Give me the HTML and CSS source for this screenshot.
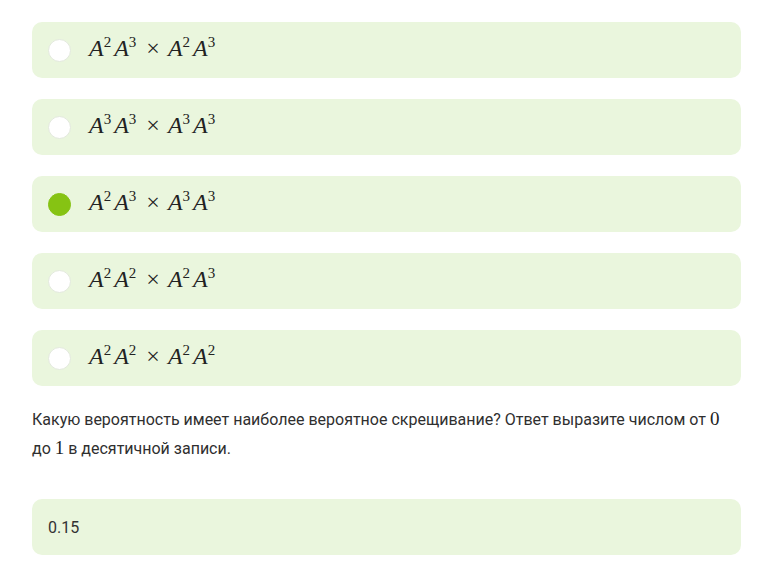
FILE: index.html
```html
<!DOCTYPE html>
<html lang="ru">
<head>
<meta charset="utf-8">
<link rel="stylesheet" href="styles.css">
</head>
<body>
<div class="page">
  <div class="options">
    <div class="option"><span class="radio"></span><span class="math"><i>A</i><sup>2</sup><i>A</i><sup>3</sup><span class="times">×</span><i>A</i><sup>2</sup><i>A</i><sup>3</sup></span></div>
    <div class="option"><span class="radio"></span><span class="math"><i>A</i><sup>3</sup><i>A</i><sup>3</sup><span class="times">×</span><i>A</i><sup>3</sup><i>A</i><sup>3</sup></span></div>
    <div class="option"><span class="radio checked"></span><span class="math"><i>A</i><sup>2</sup><i>A</i><sup>3</sup><span class="times">×</span><i>A</i><sup>3</sup><i>A</i><sup>3</sup></span></div>
    <div class="option"><span class="radio"></span><span class="math"><i>A</i><sup>2</sup><i>A</i><sup>2</sup><span class="times">×</span><i>A</i><sup>2</sup><i>A</i><sup>3</sup></span></div>
    <div class="option"><span class="radio"></span><span class="math"><i>A</i><sup>2</sup><i>A</i><sup>2</sup><span class="times">×</span><i>A</i><sup>2</sup><i>A</i><sup>2</sup></span></div>
  </div>
  <p class="question">Какую вероятность имеет наиболее вероятное скрещивание? Ответ выразите числом от <span class="num">0</span> до <span class="num">1</span> в десятичной записи.</p>
  <div class="answer">0.15</div>
</div>
</body>
</html>
```
FILE: styles.css
```css
html, body {
  margin: 0;
  padding: 0;
  background: #ffffff;
}
.page {
  padding: 22px 26px 0 32px;
  font-family: Roboto, "Liberation Sans", sans-serif;
  color: #2f2f2f;
}
.options {
  display: flex;
  flex-direction: column;
  gap: 21px;
}
.option {
  height: 56px;
  background: #eaf6dd;
  border-radius: 10px;
  display: flex;
  align-items: center;
  padding-left: 16px;
  box-sizing: border-box;
}
.radio {
  width: 23px;
  height: 23px;
  border-radius: 50%;
  background: #ffffff;
  box-sizing: border-box;
  border: 1px solid #e3e9dd;
  flex: none;
}
.radio.checked {
  background: #86c313;
  border-color: #86c313;
}
.math {
  margin-left: 18px;
  font-family: "Liberation Serif", "DejaVu Serif", serif;
  font-size: 24px;
  color: #222222;
  line-height: 1;
  position: relative;
  top: -2px;
}
.math i {
  font-style: italic;
}
.math sup {
  font-size: 15px;
  vertical-align: 9px;
  line-height: 0;
  margin-right: 3px;
}
.times {
  margin: 0 8px 0 7px;
}
.question {
  margin: 19px 0 0 0;
  font-size: 16px;
  line-height: 28px;
}
.num {
  font-family: "Liberation Serif", "DejaVu Serif", serif;
  font-size: 19px;
  color: #222;
}
.answer {
  margin-top: 36px;
  height: 56px;
  background: #eaf6dd;
  border-radius: 10px;
  display: flex;
  align-items: center;
  padding-left: 16px;
  font-size: 16px;
  color: #333;
}
```
